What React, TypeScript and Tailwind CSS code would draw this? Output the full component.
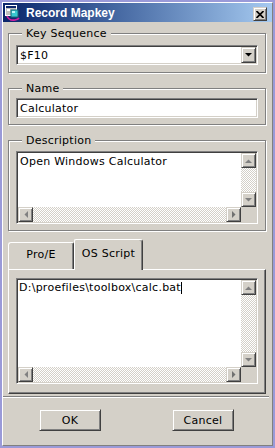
import React from 'react';

const FONT = "font-['DejaVu_Sans',sans-serif] text-[11px] leading-[13px] tracking-[0.25px] text-black";

const SUNKEN =
  'border border-t-[#808080] border-l-[#808080] border-b-white border-r-white p-[1px] shadow-[inset_1px_1px_0_#404040,inset_-1px_-1px_0_#d4d0c8]';

const RAISED =
  'border border-t-[#d4d0c8] border-l-[#d4d0c8] border-r-[#404040] border-b-[#404040] bg-[#d4d0c8] shadow-[inset_1px_1px_0_#fff,inset_-1px_-1px_0_#808080]';

const TRACK = 'bg-[repeating-conic-gradient(#d4d0c8_0_25%,#ffffff_0_50%)] bg-[length:2px_2px]';

type Dir = 'up' | 'down' | 'left' | 'right';

function Tri({ dir, color = '#808080' }: { dir: Dir; color?: string }) {
  if (dir === 'up' || dir === 'down') {
    const pts = dir === 'up' ? '0,4 7,4 3.5,0.5' : '0,0 7,0 3.5,3.5';
    return (
      <svg width="7" height="4" viewBox="0 0 7 4">
        <polygon points={pts} fill={color} />
      </svg>
    );
  }
  const pts = dir === 'right' ? '0,0 0,7 3.5,3.5' : '4,0 4,7 0.5,3.5';
  return (
    <svg width="4" height="7" viewBox="0 0 4 7">
      <polygon points={pts} fill={color} />
    </svg>
  );
}

function ArrowButton({ dir, color }: { dir: Dir; color?: string }) {
  return (
    <div className={`${RAISED} w-[15px] h-[15px] shrink-0 flex items-center justify-center`}>
      <Tri dir={dir} color={color} />
    </div>
  );
}

function ScrollField({ className, children }: { className: string; children: React.ReactNode }) {
  return (
    <div className={`${SUNKEN} bg-white grid grid-cols-[1fr_15px] grid-rows-[1fr_15px] ${className}`}>
      <div className="overflow-hidden bg-white">{children}</div>
      <div className="flex flex-col">
        <ArrowButton dir="up" />
        <div className={`flex-1 ${TRACK}`} />
        <ArrowButton dir="down" />
      </div>
      <div className="flex">
        <ArrowButton dir="left" />
        <div className={`flex-1 ${TRACK}`} />
        <ArrowButton dir="right" color="#707070" />
      </div>
      <div className="bg-[#d4d0c8]" />
    </div>
  );
}

function Group({ label, className, children }: { label: string; className: string; children: React.ReactNode }) {
  return (
    <div
      className={`ml-[5px] w-[258px] border border-[#808080] shadow-[inset_1px_1px_0_#fff,1px_1px_0_#fff] px-[7px] flex flex-col ${className}`}
    >
      <span className="-mt-[7px] ml-[6px] w-fit bg-[#d4d0c8] px-[4px]">{label}</span>
      {children}
    </div>
  );
}

function TitleIcon() {
  return (
    <svg width="16" height="16" viewBox="0 0 16 16">
      <rect x="0.5" y="0.5" width="11" height="10" fill="#c0c0c0" stroke="#ffffff" />
      <rect x="1" y="1" width="10" height="2" fill="#0a246a" />
      <rect x="2" y="4" width="3" height="2" fill="#ffffff" />
      <rect x="6" y="5" width="7" height="7" fill="#38c8d0" stroke="#1a6a78" strokeWidth="1" />
      <rect x="7" y="6" width="3" height="2" fill="#b8f4f8" />
      <path d="M2 11 Q4 16 10 15 Q13 14.5 14 13" stroke="#d020a0" strokeWidth="1.6" fill="none" />
    </svg>
  );
}

export default function App() {
  return (
    <div className={`w-[275px] h-[448px] border-2 border-[#9a9ad8] ${FONT}`}>
      <div className="h-full border border-t-white border-l-white border-r-[#808080] border-b-[#808080] bg-[#d4d0c8] flex flex-col">
        {/* title bar */}
        <div className="h-[19px] shrink-0 flex items-center bg-gradient-to-r from-[#0a246a] to-[#a6caf0] pl-[2px] pr-[5px]">
          <TitleIcon />
          <span className="ml-[5px] flex-1 font-['Liberation_Sans',sans-serif] font-bold text-[12px] leading-[14px] tracking-normal text-white">
            Record Mapkey
          </span>
          <div className={`${RAISED} mt-[3px] w-[14px] h-[14px] flex items-center justify-center`}>
            <svg width="8" height="7" viewBox="0 0 8 7">
              <path d="M0.5 0 L7.5 7 M7.5 0 L0.5 7" stroke="#000" strokeWidth="1.7" />
            </svg>
          </div>
        </div>

        <Group label="Key Sequence" className="mt-[11px] pb-[7px]">
          <div className={`${SUNKEN} mt-[5px] h-[20px] bg-white flex items-center`}>
            <span className="flex-1 pl-[2px]">$F10</span>
            <div className={`${RAISED} w-[15px] h-full flex items-center justify-center`}>
              <Tri dir="down" color="#000" />
            </div>
          </div>
        </Group>

        <Group label="Name" className="mt-[15px] pb-[6px]">
          <div className={`${SUNKEN} mt-[3px] h-[20px] bg-white flex items-center pl-[3px]`}>
            <span>Calculator</span>
          </div>
        </Group>

        <Group label="Description" className="mt-[15px] pb-[6px]">
          <ScrollField className="mt-[4px] h-[73px]">
            <div className="pl-[2px] pt-[2px]">Open Windows Calculator</div>
          </ScrollField>
        </Group>

        {/* tabs */}
        <div className="mt-[8px] ml-[5px] flex items-end">
          <div className="w-[66px] h-[27px] pb-[3px] flex items-center justify-center border-l border-t border-l-white border-t-white border-r border-r-[#404040] shadow-[inset_-1px_0_0_#808080] rounded-tl-[3px] rounded-tr-[2px]">
            Pro/E
          </div>
          <div className="relative z-10 -mb-px w-[69px] h-[31px] pb-[4px] flex items-center justify-center bg-[#d4d0c8] border-l border-t border-l-white border-t-white border-r border-r-[#404040] shadow-[inset_-1px_0_0_#808080] rounded-tl-[2px] rounded-tr-[3px]">
            OS Script
          </div>
        </div>
        <div className="ml-[5px] w-[258px] h-[125px] border border-t-white border-l-white border-r-[#404040] border-b-[#404040] shadow-[inset_-1px_-1px_0_#808080] px-[7px] pt-[8px]">
          <ScrollField className="h-[106px]">
            <div className="pl-[1px] pt-[1px] flex items-center">
              <span>D:\proefiles\toolbox\calc.bat</span>
              <span className="w-px h-[12px] bg-black" />
            </div>
          </ScrollField>
        </div>

        <div className="mt-[2px] mr-[3px] h-[2px] border-t border-t-[#808080] border-b border-b-white" />

        <div className="mt-[11px] ml-[36px] flex gap-[71px]">
          <button className={`${RAISED} w-[62px] h-[22px] flex items-center justify-center`}>OK</button>
          <button className={`${RAISED} w-[62px] h-[22px] flex items-center justify-center`}>Cancel</button>
        </div>
      </div>
    </div>
  );
}
